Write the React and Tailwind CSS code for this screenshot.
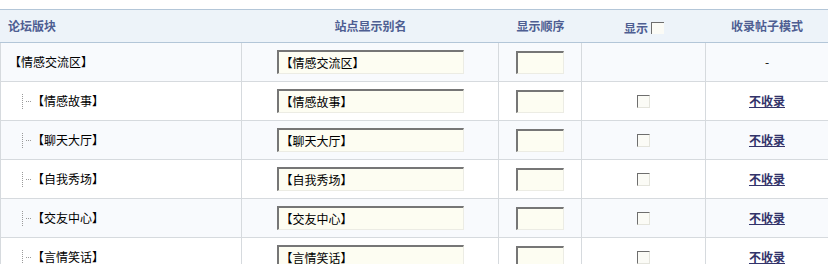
import React from "react";

const rows = [
  { name: "【情感交流区】", parent: true },
  { name: "【情感故事】" },
  { name: "【聊天大厅】" },
  { name: "【自我秀场】" },
  { name: "【交友中心】" },
  { name: "【言情笑话】" },
];

function Box() {
  return (
    <span className="inline-block w-[13px] h-[13px] bg-[#fbfbf6] border-t border-l border-t-[#6e6e6e] border-l-[#6e6e6e] border-b border-r border-b-[#e4e4dc] border-r-[#e4e4dc]" />
  );
}

function Row({ row, index }) {
  const bg = index % 2 === 0 ? "bg-[#f8fafd]" : "bg-white";
  return (
    <div className={`grid grid-cols-[242px_257px_83px_124px_122px] h-[39px] border-b border-[#d6dade] ${bg}`}>
      <div className="flex items-center border-l border-r border-[#d6dade] pl-2">
        {row.parent ? (
          <span>{row.name}</span>
        ) : (
          <div className="flex items-center pl-[13px]">
            <span className="h-[15px] border-l border-dotted border-[#9a9a9a]" />
            <span className="w-[5px] ml-[3px] border-t border-dotted border-[#9a9a9a]" />
            <span className="ml-[1px]">{row.name}</span>
          </div>
        )}
      </div>
      <div className="flex items-center justify-center border-r border-[#d6dade]">
        <input
          readOnly
          value={row.name}
          className="w-[187px] h-[24px] bg-[#fdfdf2] border-t-2 border-l-2 border-t-[#767676] border-l-[#767676] border-b border-r border-b-[#ecece4] border-r-[#ecece4] px-[2px] text-[12px] text-black outline-none"
        />
      </div>
      <div className="flex items-center justify-center border-r border-[#d6dade]">
        <input
          readOnly
          value=""
          className="w-[48px] h-[23px] bg-[#fdfdf2] border-t-2 border-l-2 border-t-[#767676] border-l-[#767676] border-b border-r border-b-[#ecece4] border-r-[#ecece4] outline-none"
        />
      </div>
      <div className="flex items-center justify-center border-r border-[#d6dade]">
        {!row.parent && <Box />}
      </div>
      <div className="flex items-center justify-center">
        {row.parent ? (
          <span>-</span>
        ) : (
          <a href="#" className="font-bold underline text-[#32336a]">
            不收录
          </a>
        )}
      </div>
    </div>
  );
}

export default function App() {
  return (
    <div
      className="w-[828px] h-[264px] overflow-hidden bg-white pt-[9px] text-[12px] text-black"
      style={{ fontFamily: '"Noto Sans CJK SC", "DejaVu Sans", sans-serif' }}
    >
      <div className="grid grid-cols-[242px_257px_83px_124px_122px] h-[34px] bg-[#edf3f9] border-t border-b border-t-[#b3c6d8] border-b-[#b3c6d8] font-bold text-[#4e5e92]">
        <div className="flex items-center pl-2">论坛版块</div>
        <div className="flex items-center justify-center">站点显示别名</div>
        <div className="flex items-center justify-center">显示顺序</div>
        <div className="flex items-center justify-center gap-[3px] pt-[3px]">
          <span>显示</span>
          <span className="inline-block w-[13px] h-[12px] bg-[#fbfbf6] border-t border-l border-[#6e6e6e] border-b-0 border-r-0" />
        </div>
        <div className="flex items-center justify-center">收录帖子模式</div>
      </div>
      {rows.map((row, i) => (
        <Row key={row.name} row={row} index={i} />
      ))}
    </div>
  );
}
